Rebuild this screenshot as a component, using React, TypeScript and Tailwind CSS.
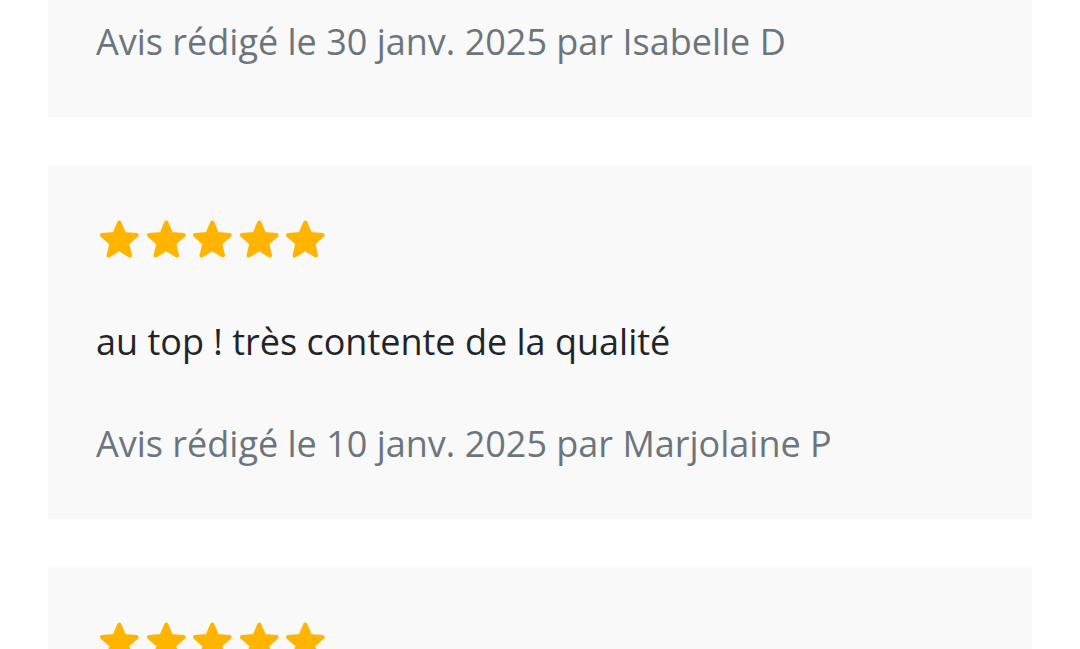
import React from "react";

const Star = () => (
  <svg viewBox="0 0 24 24" className="w-[46.6px] h-[46px] shrink-0" aria-hidden="true">
    <g transform="translate(12 11.6) scale(0.9) translate(-12 -11.6)">
      <path
        d="M12 17.27L18.18 21l-1.64-7.03L22 9.24l-7.19-.61L12 2 9.19 8.63 2 9.24l5.46 4.73L5.82 21z"
        fill="#ffb400"
        stroke="#ffb400"
        strokeWidth="2.4"
        strokeLinejoin="round"
      />
    </g>
  </svg>
);

const Stars = () => (
  <div className="flex items-center h-[54px]">
    {[0, 1, 2, 3, 4].map((s) => (
      <Star key={s} />
    ))}
  </div>
);

const DateLine = ({ date, author }: { date: string; author: string }) => (
  <p className="text-[36px] leading-[54px] text-[#6c757d]">
    Avis rédigé le {date} par {author}
  </p>
);

export default function App() {
  return (
    <div
      className="w-[1080px] h-[649px] overflow-hidden bg-white"
      style={{ fontFamily: '"Open Sans", "Noto Sans", sans-serif' }}
    >
      <div className="-mt-[33px] px-12 flex flex-col gap-12">
        <div className="bg-[#f9f9f9] p-12 flex flex-col gap-12">
          <DateLine date="30 janv. 2025" author="Isabelle D" />
        </div>
        <div className="bg-[#f9f9f9] p-12 flex flex-col gap-12">
          <Stars />
          <p className="text-[36px] leading-[54px] text-[#212529]">
            au top ! très contente de la qualité
          </p>
          <DateLine date="10 janv. 2025" author="Marjolaine P" />
        </div>
        <div className="bg-[#f9f9f9] p-12 flex flex-col gap-12 h-[200px]">
          <Stars />
        </div>
      </div>
    </div>
  );
}
